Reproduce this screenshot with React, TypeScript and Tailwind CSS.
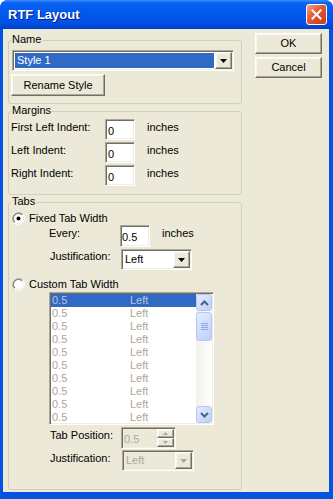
import React from 'react';

const sunken =
  'border border-t-[#ACA899] border-l-[#ACA899] border-r-white border-b-white shadow-[inset_1px_1px_0_#716F64,inset_-1px_-1px_0_#F1EFE2]';
const raised =
  'border border-t-white border-l-white border-r-[#716F64] border-b-[#716F64] shadow-[inset_-1px_-1px_0_#ACA899,inset_1px_1px_0_#F8F7F1] bg-[#ECE9D8]';

const Group: React.FC<{ label: string; className?: string; children: React.ReactNode }> = ({ label, className = '', children }) => (
  <div className={`relative border border-[#D0D0BF] rounded-[3px] ${className}`}>
    <span className="absolute left-[2px] top-[-8px] px-[1px] bg-[#ECE9D8] leading-[13px]">{label}</span>
    {children}
  </div>
);

const DropBtn: React.FC<{ disabled?: boolean }> = ({ disabled }) => (
  <div className={`w-[17px] h-full flex items-center justify-center ${raised}`}>
    <svg width="7" height="4" viewBox="0 0 7 4">
      <path d="M0 0H7L3.5 4Z" fill={disabled ? '#ACA899' : '#000'} />
    </svg>
  </div>
);

const Radio: React.FC<{ checked?: boolean }> = ({ checked }) => (
  <svg width="13" height="13" viewBox="0 0 13 13">
    <circle cx="6.5" cy="6.5" r="5" fill="white" />
    <path d="M2.26 10.74A6 6 0 0 1 10.74 2.26" stroke="#ACA899" fill="none" />
    <path d="M10.74 2.26A6 6 0 0 1 2.26 10.74" stroke="#FFFFFF" fill="none" />
    <path d="M2.96 10.04A5 5 0 0 1 10.04 2.96" stroke="#716F64" fill="none" />
    <path d="M10.04 2.96A5 5 0 0 1 2.96 10.04" stroke="#F1EFE2" fill="none" />
    {checked && <circle cx="6.5" cy="6.5" r="2" fill="#000" />}
  </svg>
);

const ScrollBtn: React.FC<{ up?: boolean }> = ({ up }) => (
  <div className="h-[17px] rounded-[3px] border border-[#B5C6F0] bg-[linear-gradient(135deg,#E4ECFE,#BDCFFA)] flex items-center justify-center">
    <svg width="9" height="6" viewBox="0 0 9 6">
      <path d={up ? 'M1 5L4.5 1.5L8 5' : 'M1 1L4.5 4.5L8 1'} stroke="#4D6185" strokeWidth="2" fill="none" />
    </svg>
  </div>
);

const rows = Array.from({ length: 10 }, (_, i) => i);

export default function App() {
  return (
    <div className="w-[333px] h-[499px] flex flex-col bg-[#0454E4] rounded-t-[8px] overflow-hidden font-['Liberation_Sans',Arial,sans-serif] text-[11px] text-black">
      {/* title bar */}
      <div className="h-[29px] shrink-0 flex items-center pl-[8px] pr-[6px] bg-[linear-gradient(to_bottom,#3D8FFF_0%,#0A63F2_10%,#0058EE_45%,#0053E6_75%,#0046D3_92%,#0040C8_100%)]">
        <span className="flex-1 text-white font-bold text-[13px] [text-shadow:1px_1px_0_#0A1883] pt-[1px]">RTF Layout</span>
        <div className="w-[21px] h-[21px] rounded-[3px] border border-white bg-[linear-gradient(135deg,#F0A48A,#E0582F_45%,#C83A1C)] flex items-center justify-center">
          <svg width="11" height="11" viewBox="0 0 11 11">
            <path d="M1.5 1.5L9.5 9.5M9.5 1.5L1.5 9.5" stroke="white" strokeWidth="2" strokeLinecap="square" />
          </svg>
        </div>
      </div>

      {/* client area */}
      <div className="flex-1 flex bg-[#ECE9D8] ml-[3px] mr-[4px] mb-[7px] pl-[5px]">
        <div className="w-[234px] flex flex-col mt-[11px] pb-[2px]">
          <Group label="Name" className="pt-[9px] pb-[7px] pl-[3px]">
            <div className={`w-[222px] h-[21px] flex bg-white p-[1px] ${sunken}`}>
              <div className="flex-1 m-[1px] bg-[#316AC5] text-white flex items-center pl-[2px]">Style 1</div>
              <DropBtn />
            </div>
            <button className={`mt-[3px] -ml-[1px] w-[94px] h-[22px] flex items-center justify-center ${raised}`}>Rename Style</button>
          </Group>

          <Group label="Margins" className="mt-[7px] pt-[7px] pb-[8px] pl-[2px]">
            <div className="flex flex-col gap-[2px]">
              {['First Left Indent:', 'Left Indent:', 'Right Indent:'].map((l) => (
                <div key={l} className="flex items-start h-[21px]">
                  <span className="w-[94px] pt-[2px] leading-[13px]">{l}</span>
                  <div className={`w-[30px] h-[21px] bg-white pl-[2px] pt-[5px] leading-[13px] ${sunken}`}>0</div>
                  <span className="ml-[12px] pt-[2px] leading-[13px]">inches</span>
                </div>
              ))}
            </div>
          </Group>

          <Group label="Tabs" className="mt-[7px] flex-1 pt-[9px]">
            <div className="flex items-center h-[13px] pl-[3px] gap-[4px]">
              <Radio checked />
              <span className="leading-[13px]">Fixed Tab Width</span>
            </div>
            <div className="flex items-start h-[22px] ml-[40px]">
              <span className="w-[71px] pt-[2px] leading-[13px]">Every:</span>
              <div className={`w-[30px] h-[22px] bg-white pl-[1px] pt-[5px] leading-[13px] ${sunken}`}>0.5</div>
              <span className="ml-[12px] pt-[2px] leading-[13px]">inches</span>
            </div>
            <div className="flex items-start h-[21px] ml-[41px] mt-[2px]">
              <span className="w-[71px] pt-[1px] leading-[13px]">Justification:</span>
              <div className={`w-[71px] h-[21px] flex bg-white p-[1px] ${sunken}`}>
                <div className="flex-1 flex items-center pl-[2px]">Left</div>
                <DropBtn />
              </div>
            </div>
            <div className="flex items-center h-[13px] pl-[3px] gap-[4px] mt-[8px]">
              <Radio />
              <span className="leading-[13px]">Custom Tab Width</span>
            </div>
            <div className={`ml-[40px] mt-[1px] w-[165px] h-[133px] flex bg-white p-[1px] ${sunken}`}>
              <div className="flex-1 flex flex-col overflow-hidden">
                {rows.map((i) => (
                  <div
                    key={i}
                    className={`h-[13px] shrink-0 flex items-center leading-[13px] ${i === 0 ? 'bg-[#316AC5] text-[#B9C4DC]' : 'text-[#ACA899]'}`}
                  >
                    <span className="w-[79px] pl-[1px]">0.5</span>
                    <span>Left</span>
                  </div>
                ))}
              </div>
              <div className="w-[16px] flex flex-col bg-[linear-gradient(to_right,#F3F1EC,#FEFEFB)]">
                <ScrollBtn up />
                <div className="mt-[1px] h-[29px] rounded-[3px] border border-[#B5C6F0] bg-[linear-gradient(135deg,#E4ECFE,#BDCFFA)] flex items-center justify-center">
                  <svg width="7" height="8" viewBox="0 0 7 8">
                    <path d="M0 0.5H7M0 2.5H7M0 4.5H7M0 6.5H7" stroke="#8FA8E6" />
                  </svg>
                </div>
                <div className="mt-auto">
                  <ScrollBtn />
                </div>
              </div>
            </div>
            <div className="flex items-start h-[22px] ml-[41px] mt-[2px]">
              <span className="w-[71px] pt-[2px] leading-[13px]">Tab Position:</span>
              <div className={`w-[55px] h-[22px] flex bg-[#ECE9D8] p-[1px] ${sunken}`}>
                <div className="flex-1 text-[#ACA899] pl-[1px] pt-[4px] leading-[13px]">0.5</div>
                <div className="w-[17px] flex flex-col">
                  <div className={`flex-1 flex items-center justify-center ${raised}`}>
                    <svg width="5" height="3" viewBox="0 0 5 3"><path d="M2.5 0L5 3H0Z" fill="#ACA899" /></svg>
                  </div>
                  <div className={`flex-1 flex items-center justify-center ${raised}`}>
                    <svg width="5" height="3" viewBox="0 0 5 3"><path d="M0 0H5L2.5 3Z" fill="#ACA899" /></svg>
                  </div>
                </div>
              </div>
            </div>
            <div className="flex items-start h-[21px] ml-[41px] mt-[1px]">
              <span className="w-[72px] pt-[2px] leading-[13px]">Justification:</span>
              <div className={`w-[72px] h-[21px] flex bg-[#ECE9D8] p-[1px] ${sunken}`}>
                <div className="flex-1 flex items-center pl-[2px] text-[#ACA899]">Left</div>
                <DropBtn disabled />
              </div>
            </div>
          </Group>
        </div>

        <div className="ml-[13px] mt-[4px] flex flex-col gap-[3px]">
          <button className={`w-[67px] h-[21px] flex items-center justify-center ${raised}`}>OK</button>
          <button className={`w-[67px] h-[21px] flex items-center justify-center ${raised}`}>Cancel</button>
        </div>
      </div>
    </div>
  );
}
